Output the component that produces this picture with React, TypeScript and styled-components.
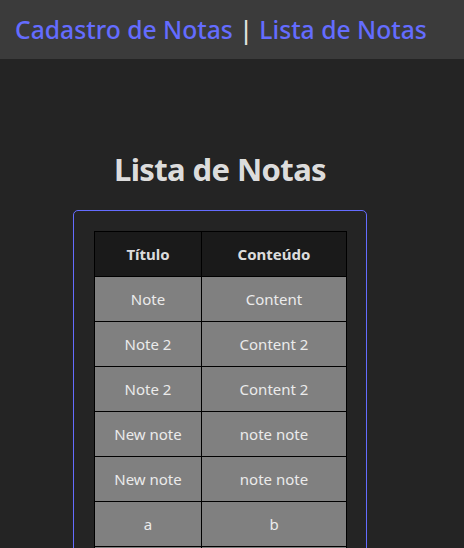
import React from 'react';
import styled, { createGlobalStyle } from 'styled-components';

const GlobalStyle = createGlobalStyle`
  html, body {
    margin: 0;
    padding: 0;
    background-color: #242424;
    color: rgba(255, 255, 255, 0.87);
    font-family: 'Noto Sans', 'Open Sans', sans-serif;
  }
`;

const NavBar = styled.nav`
  display: flex;
  align-items: center;
  height: 59px;
  padding: 0 15px;
  background-color: #3b3b3b;
  font-size: 24.7px;
  font-weight: 500;
  white-space: pre;
`;

const NavLink = styled.a`
  color: #646cff;
  text-decoration: none;
  cursor: pointer;
`;

const Divider = styled.span`
  color: rgba(255, 255, 255, 0.87);
`;

const Main = styled.main`
  display: flex;
  flex-direction: column;
  align-items: center;
  padding: 89px 24px 0 0;
`;

const Title = styled.h1`
  margin: 0 0 20px;
  font-size: 31px;
  font-weight: 700;
  letter-spacing: -0.6px;
  line-height: 42px;
  color: rgba(255, 255, 255, 0.87);
`;

const Card = styled.div`
  width: 252px;
  padding: 20px;
  border: 1px solid #646cff;
  border-radius: 5px;
`;

const Table = styled.table`
  width: 100%;
  border-collapse: collapse;
  table-layout: fixed;
  font-size: 15px;
`;

const HeadCell = styled.th<{ $wide?: boolean }>`
  height: 45px;
  padding: 0 8px;
  width: ${(p) => (p.$wide ? '145px' : '107px')};
  border: 1px solid #000;
  background-color: #1a1a1a;
  font-weight: 700;
  text-align: center;
  box-sizing: border-box;
`;

const Cell = styled.td`
  height: 44px;
  padding: 0 8px;
  border: 1px solid #000;
  background-color: #808080;
  color: #ebebeb;
  text-align: center;
`;

const notes = [
  { titulo: 'Note', conteudo: 'Content' },
  { titulo: 'Note 2', conteudo: 'Content 2' },
  { titulo: 'Note 2', conteudo: 'Content 2' },
  { titulo: 'New note', conteudo: 'note note' },
  { titulo: 'New note', conteudo: 'note note' },
  { titulo: 'a', conteudo: 'b' },
  { titulo: 'c', conteudo: 'd' },
];

export default function App() {
  return (
    <>
      <GlobalStyle />
      <NavBar>
        <NavLink>Cadastro de Notas</NavLink>
        <Divider> | </Divider>
        <NavLink>Lista de Notas</NavLink>
      </NavBar>
      <Main>
        <Title>Lista de Notas</Title>
        <Card>
          <Table>
            <thead>
              <tr>
                <HeadCell>Título</HeadCell>
                <HeadCell $wide>Conteúdo</HeadCell>
              </tr>
            </thead>
            <tbody>
              {notes.map((n, i) => (
                <tr key={i}>
                  <Cell>{n.titulo}</Cell>
                  <Cell>{n.conteudo}</Cell>
                </tr>
              ))}
            </tbody>
          </Table>
        </Card>
      </Main>
    </>
  );
}
